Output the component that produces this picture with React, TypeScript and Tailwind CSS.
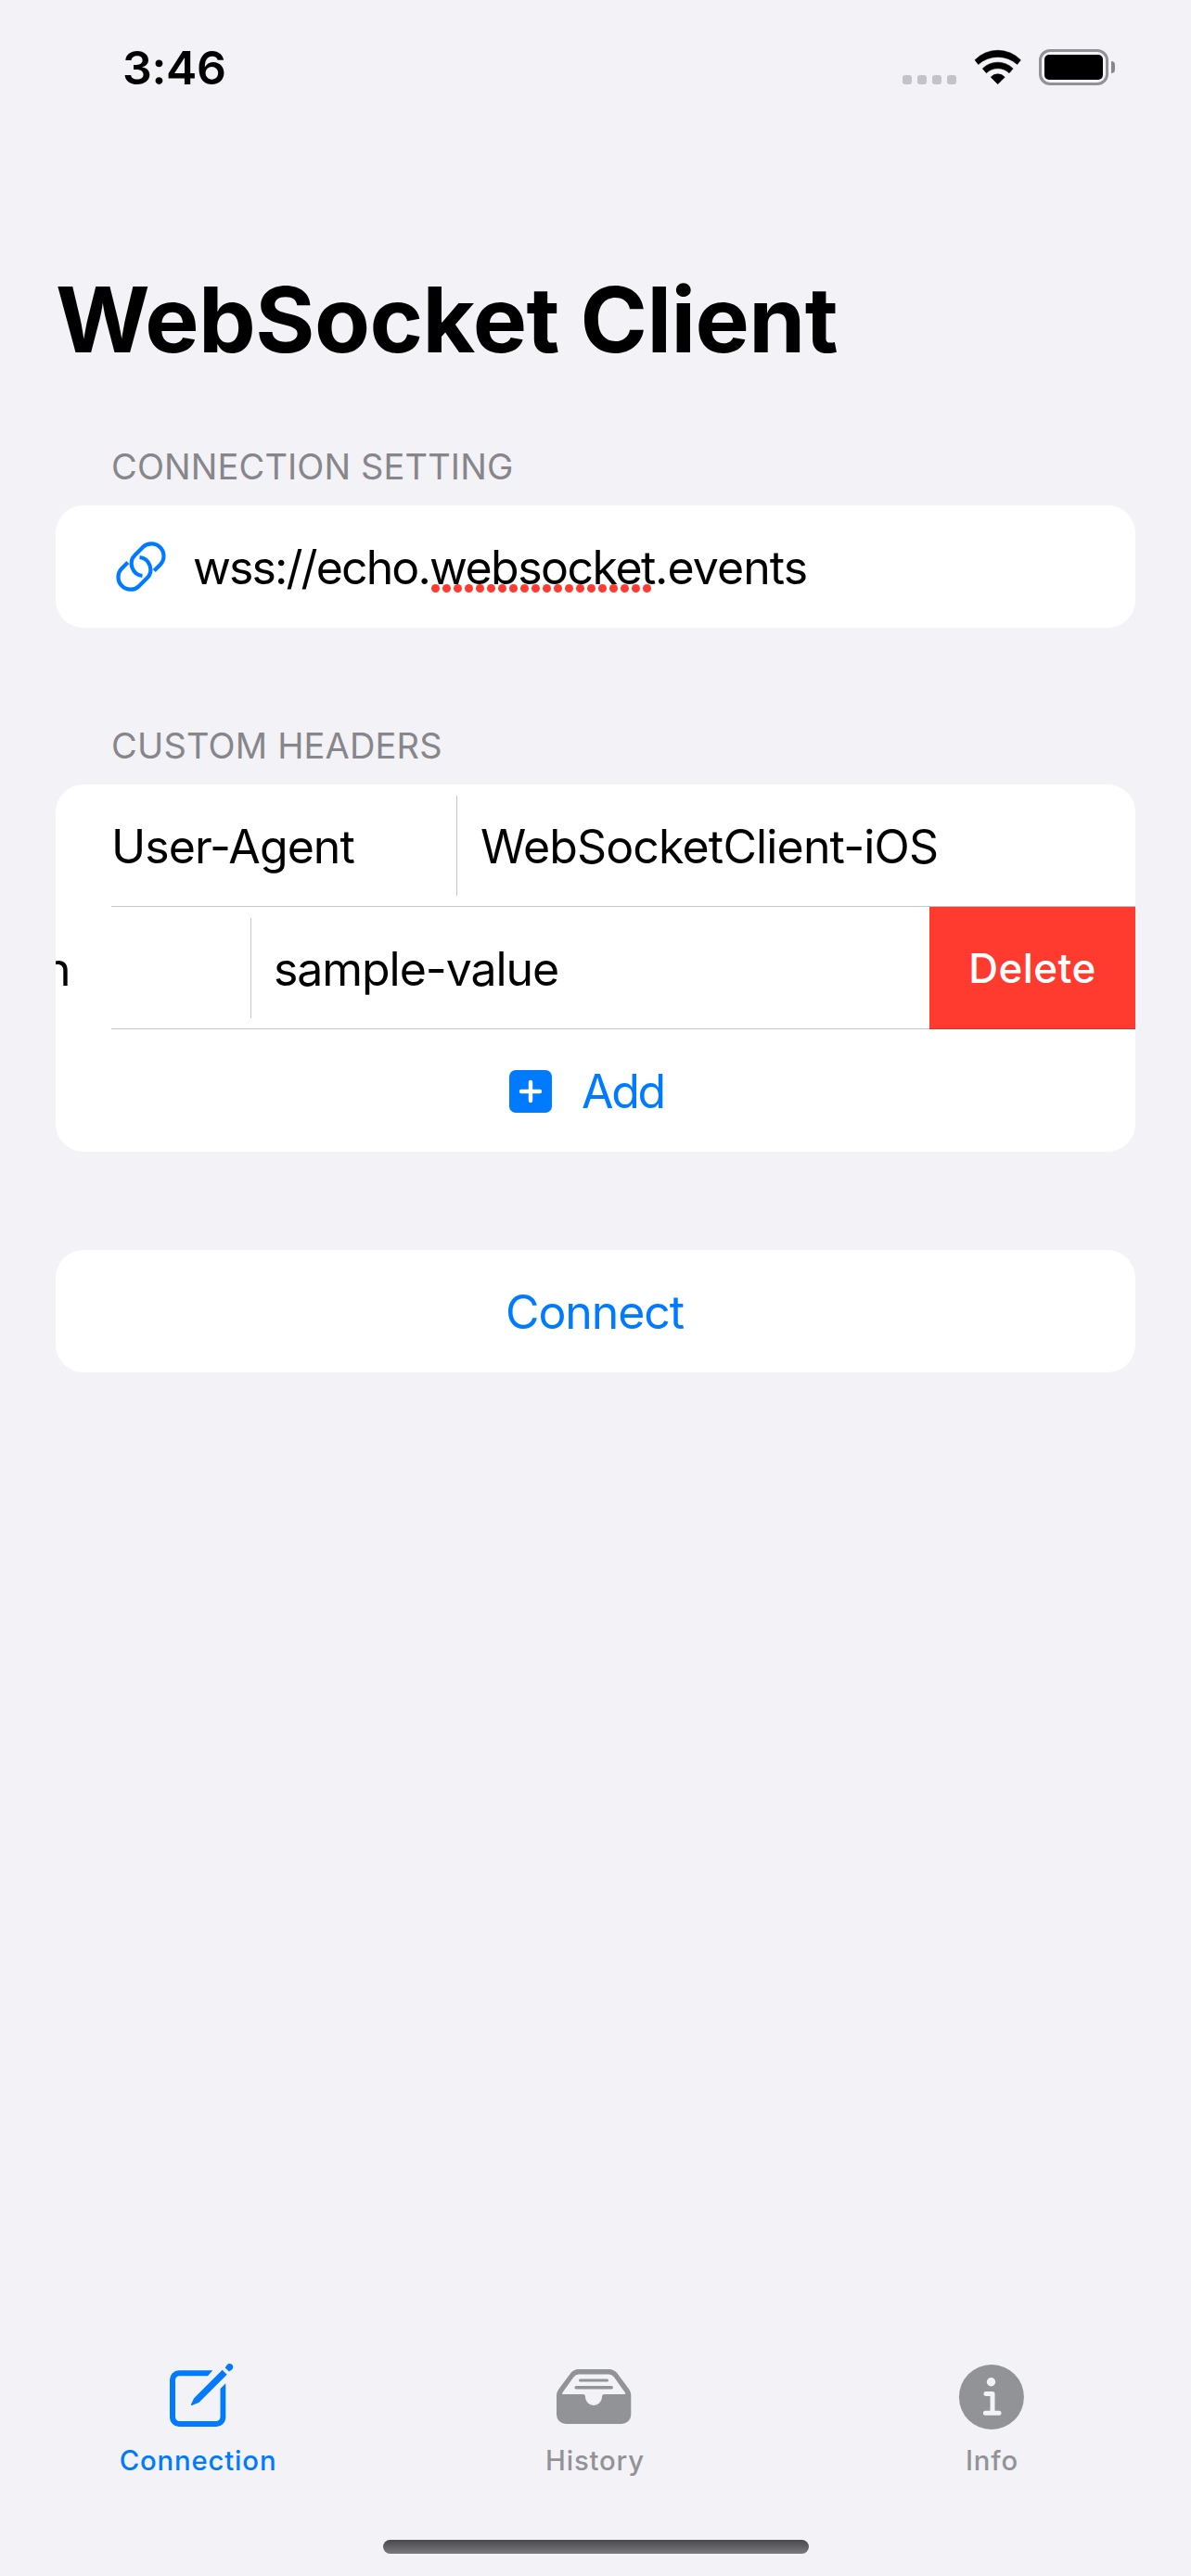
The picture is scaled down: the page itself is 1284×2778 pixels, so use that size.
import type { ReactNode } from 'react';

function StatusBar() {
  return (
    <header className="flex h-[146px] items-center justify-between pl-[132px] pr-[82px]">
      <span className="text-[50px] font-semibold leading-none tracking-[-0.35px]">3:46</span>
      <div className="flex items-center">
        <div className="mt-[26px] flex gap-1.5">
          {[0, 1, 2, 3].map((i) => (
            <span key={i} className="size-2.5 rounded-[3px] bg-[#c3c2c8]" />
          ))}
        </div>
        <svg className="-mt-px ml-[19px] h-10 w-[52px]" viewBox="0 0 52 40" fill="#000" stroke="#000" strokeWidth="0.6" strokeLinejoin="round">
          <path d="M1 11.7A34.5 34.5 0 0 1 50.4 11.7L46.7 16.4A31.5 31.5 0 0 0 4.7 16.4Z" />
          <path d="M9.3 20.9A23.4 23.4 0 0 1 42.1 20.9L38 25.8A17.6 17.6 0 0 0 13.4 25.8Z" />
          <path d="M18.2 30.2A10 10 0 0 1 33.2 30.2L25.7 37.7Z" />
        </svg>
        <div className="-mt-px ml-[18px] flex h-[39px] w-[75px] rounded-[12px] border-3 border-[#929195] p-[3px]">
          <div className="flex-1 rounded-[5px] bg-black" />
        </div>
        <div className="-mt-px ml-[3px] h-[13px] w-1 rounded-r-full bg-[#88878b]" />
      </div>
    </header>
  );
}

function LinkIcon() {
  return (
    <svg className="size-14 shrink-0" viewBox="0 0 56 56" fill="none" stroke="#007aff" strokeWidth="4.2">
      <path d="M42.2 32.4L48.9 25.7A13.3 13.3 0 0 0 30.1 6.9L21.6 15.4A13.3 13.3 0 0 0 29.5 38" />
      <path d="M13.8 23.6L7.1 30.3A13.3 13.3 0 0 0 25.9 49.1L34.4 40.6A13.3 13.3 0 0 0 26.5 18" />
    </svg>
  );
}

function SectionLabel({ children }: { children: ReactNode }) {
  return <h2 className="mb-[22px] pl-15 text-[38px] leading-[40px] text-[#86868b]">{children}</h2>;
}

function Card({ children }: { children: ReactNode }) {
  return <div className="overflow-hidden rounded-[30px] bg-white text-[50px] leading-[60px]">{children}</div>;
}

function Separator() {
  return <span className="absolute bottom-0 left-15 right-0 h-px bg-[#3c3c43]/30" />;
}

function ComposeIcon() {
  return (
    <svg className="size-20" viewBox="0 0 80 80" fill="currentColor">
      <path d="M55.3 11.3H19A10 10 0 0 0 9 21.3V62A10 10 0 0 0 19 72H59.3A10 10 0 0 0 69.3 62V25.3L63.5 31V61.5A4.5 4.5 0 0 1 59 66H19.5A4.5 4.5 0 0 1 15 61.5V21.8A4.5 4.5 0 0 1 19.5 17.3H50Z" />
      <path d="M65.7 10.7L70.7 15.7L41.4 45Q40.4 46 39 46.5L33 49Q31.6 49.4 32 48.1L34.6 42.2Q35.1 41.2 35.9 40.4Z" />
      <path d="M68.7 8.4L70.4 5.8A3.7 3.7 0 1 1 75.6 10.8L73 12.4Z" />
    </svg>
  );
}

function TrayIcon() {
  return (
    <svg className="size-20 overflow-visible" viewBox="0 0 80 80">
      <path
        fill="currentColor"
        fillRule="evenodd"
        d="M-2 38Q-2 35 0 32L13 14.6Q16.4 10 22 10H54.5Q60 10 63.5 14.6L76.5 32Q78.3 35 78.3 38V59A10 10 0 0 1 68.3 69H8A10 10 0 0 1 -2 59ZM4.2 35.6Q3.4 37 5 37H26.5Q29 37 29 40A9 9 0 0 0 47 40Q47 37 49.5 37H71.3Q72.9 37 72.1 35.6L60 18.5Q57.6 15.5 54.5 15.5H22Q18.6 15.5 16.4 18.5Z"
      />
      <path d="M23.5 22H52.5" stroke="currentColor" strokeWidth="3" strokeLinecap="round" />
      <path d="M19.2 29.8H57.2" stroke="currentColor" strokeWidth="3.5" strokeLinecap="round" />
    </svg>
  );
}

function InfoIcon() {
  return (
    <svg className="size-20" viewBox="0 0 80 80">
      <circle cx="38.9" cy="40" r="35" fill="currentColor" />
      <circle cx="38.5" cy="23.7" r="4.7" fill="#f2f2f7" />
      <path d="M33 36.4H40V57.2M32.4 57.2H47" fill="none" stroke="#f2f2f7" strokeWidth="5" strokeLinecap="round" strokeLinejoin="round" />
    </svg>
  );
}

function Tab({ icon, label, active }: { icon: ReactNode; label: string; active?: boolean }) {
  return (
    <div className={`flex flex-col items-center ${active ? 'text-[#007aff]' : 'text-[#929397]'}`}>
      {icon}
      <span className="mt-[9px] pr-px text-[29.3px] font-medium leading-[40px] tracking-[0.85px]">{label}</span>
    </div>
  );
}

export default function App() {
  return (
    <div className="flex h-[2778px] w-[1284px] flex-col overflow-hidden bg-[#f2f2f7] font-['Inter',sans-serif] text-black">
      <StatusBar />
      <main className="flex-1 px-15 pt-[139px]">
        <h1 className="mb-[78px] text-[98px] font-bold leading-[120px] tracking-[-0.55px]">WebSocket Client</h1>

        <SectionLabel>
          <span className="tracking-[0.12px]">CONNECTION SETTING</span>
        </SectionLabel>
        <Card>
          <div className="flex h-[132px] items-center gap-[28px] pl-16">
            <LinkIcon />
            <p className="pt-0.5 tracking-[-0.9px]">
              <span className="tracking-[-1.9px]">wss://echo.</span>
              <span className="relative tracking-[-1.5px]">
                websocket
                <span className="absolute left-[2px] top-[48px] flex gap-[3px]">
                  {Array.from({ length: 20 }, (_, i) => (
                    <span key={i} className="size-[9px] rounded-full bg-[#ff3b30]" />
                  ))}
                </span>
              </span>
              .events
            </p>
          </div>
        </Card>

        <div className="h-[107px]" />
        <SectionLabel>
          <span className="tracking-[0.18px]">CUSTOM HEADERS</span>
        </SectionLabel>
        <Card>
          <div className="relative flex h-[132px] items-center">
            <span className="w-[432px] pl-[60px] pt-0.5 tracking-[-0.92px]">User-Agent</span>
            <span className="h-[108px] w-px bg-[#c6c6c8]" />
            <span className="pl-[25px] pt-0.5 tracking-[-0.84px]">WebSocketClient-iOS</span>
            <Separator />
          </div>
          <div className="relative flex h-[132px] items-center">
            <span className="w-[210px] overflow-hidden pt-0.5">
              <span className="-ml-[13px]">n</span>
            </span>
            <span className="h-[108px] w-px bg-[#c6c6c8]" />
            <span className="flex-1 pl-[24px] pt-0.5 tracking-[-1.07px]">sample-value</span>
            <span className="flex h-full w-[222px] items-center justify-center bg-[#ff3b30] text-[44px] font-[450] tracking-[0.4px] text-white">
              Delete
            </span>
            <Separator />
          </div>
          <div className="flex h-[132px] items-center justify-center gap-8 pr-[19px] pt-0.5 text-[#007aff]">
            <svg className="size-[46px]" viewBox="0 0 46 46">
              <rect width="46" height="46" rx="7" fill="currentColor" />
              <path d="M23 13V33M13 23H33" stroke="#fff" strokeWidth="4.4" strokeLinecap="round" />
            </svg>
            <span className="tracking-[-2.3px]">Add</span>
          </div>
        </Card>

        <div className="h-[106px]" />
        <Card>
          <div className="flex h-[132px] items-center justify-center pr-0.5 pt-0.5 tracking-[-1.1px] text-[#007aff]">Connect</div>
        </Card>
      </main>

      <nav className="grid h-[194px] grid-cols-3">
        <Tab icon={<ComposeIcon />} label="Connection" active />
        <Tab icon={<TrayIcon />} label="History" />
        <Tab icon={<InfoIcon />} label="Info" />
      </nav>
      <footer className="flex h-[39px] justify-center">
        <div className="ml-px h-[15px] w-[459px] rounded-full bg-linear-to-b from-[#4a4a4c] to-[#7a7a7c]" />
      </footer>
    </div>
  );
}
